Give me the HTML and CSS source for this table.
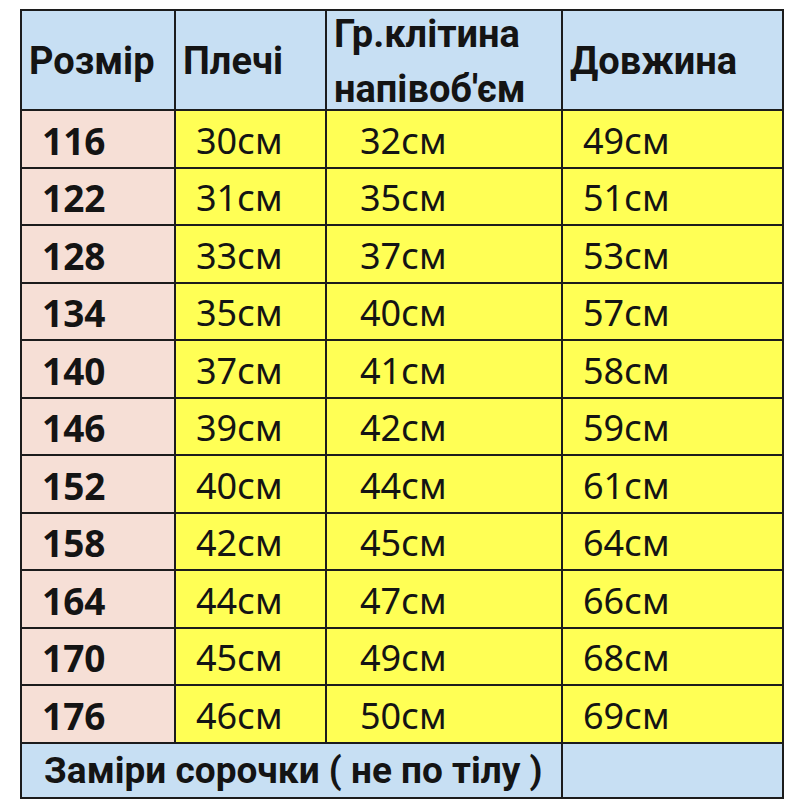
FILE: index.html
```html
<!DOCTYPE html>
<html lang="uk">
<head>
<meta charset="utf-8">
<title>Розмірна сітка</title>
<link rel="stylesheet" href="styles.css">
</head>
<body>
<table class="sizes">
  <colgroup>
    <col class="c1"><col class="c2"><col class="c3"><col class="c4">
  </colgroup>
  <thead>
    <tr class="head">
      <th>Розмір</th>
      <th>Плечі</th>
      <th><span class="two">Гр.клітина<br>напівоб'єм</span></th>
      <th>Довжина</th>
    </tr>
  </thead>
  <tbody>
    <tr><td class="size">116</td><td class="v">30см</td><td class="v wide">32см</td><td class="v">49см</td></tr>
    <tr><td class="size">122</td><td class="v">31см</td><td class="v wide">35см</td><td class="v">51см</td></tr>
    <tr><td class="size">128</td><td class="v">33см</td><td class="v wide">37см</td><td class="v">53см</td></tr>
    <tr><td class="size">134</td><td class="v">35см</td><td class="v wide">40см</td><td class="v">57см</td></tr>
    <tr><td class="size">140</td><td class="v">37см</td><td class="v wide">41см</td><td class="v">58см</td></tr>
    <tr><td class="size">146</td><td class="v">39см</td><td class="v wide">42см</td><td class="v">59см</td></tr>
    <tr><td class="size">152</td><td class="v">40см</td><td class="v wide">44см</td><td class="v">61см</td></tr>
    <tr><td class="size">158</td><td class="v">42см</td><td class="v wide">45см</td><td class="v">64см</td></tr>
    <tr><td class="size">164</td><td class="v">44см</td><td class="v wide">47см</td><td class="v">66см</td></tr>
    <tr><td class="size">170</td><td class="v">45см</td><td class="v wide">49см</td><td class="v">68см</td></tr>
    <tr><td class="size">176</td><td class="v">46см</td><td class="v wide">50см</td><td class="v">69см</td></tr>
  </tbody>
  <tfoot>
    <tr class="foot"><td colspan="3" class="note">Заміри сорочки ( не по тілу )</td><td class="empty"></td></tr>
  </tfoot>
</table>
</body>
</html>
```

FILE: styles.css
```css
html, body {
  margin: 0;
  padding: 0;
  background: #ffffff;
}

body {
  padding: 9px 0 0 20px;
  font-family: "Noto Sans", "Open Sans", sans-serif;
  color: #141414;
}

.sizes {
  border-collapse: collapse;
  table-layout: fixed;
  width: 762px;
  border: 2px solid #1c1c1c;
}

.c1 { width: 154px; }
.c2 { width: 151px; }
.c3 { width: 236px; }
.c4 { width: 221px; }

.sizes th,
.sizes td {
  border: 2px solid #1c1c1c;
  padding: 0;
  vertical-align: middle;
  text-align: left;
}

.head th {
  height: 96px;
  background: #c7dff3;
  font-family: Roboto, "Noto Sans", sans-serif;
  font-weight: 700;
  font-size: 38px;
  line-height: 44px;
  padding: 2px 0 0 7px;
  white-space: nowrap;
}

.two {
  display: block;
  line-height: 55px;
  margin: -6px 0 -8px;
}

tbody tr {
  height: 57.5px;
}

.size {
  background: #f6dfd6;
  font-weight: 700;
  font-size: 37px;
  padding: 3px 0 0 20px !important;
}

.v {
  background: #ffff55;
  font-weight: 400;
  font-size: 36px;
  padding: 3px 0 0 20px !important;
}

.v.wide {
  padding-left: 33px !important;
}

.foot td {
  height: 51px;
  background: #c7dff3;
}

.note {
  font-family: Roboto, "Noto Sans", sans-serif;
  font-weight: 700;
  font-size: 37px;
  line-height: 40px;
  padding: 2px 0 0 22px !important;
  white-space: nowrap;
}
```
